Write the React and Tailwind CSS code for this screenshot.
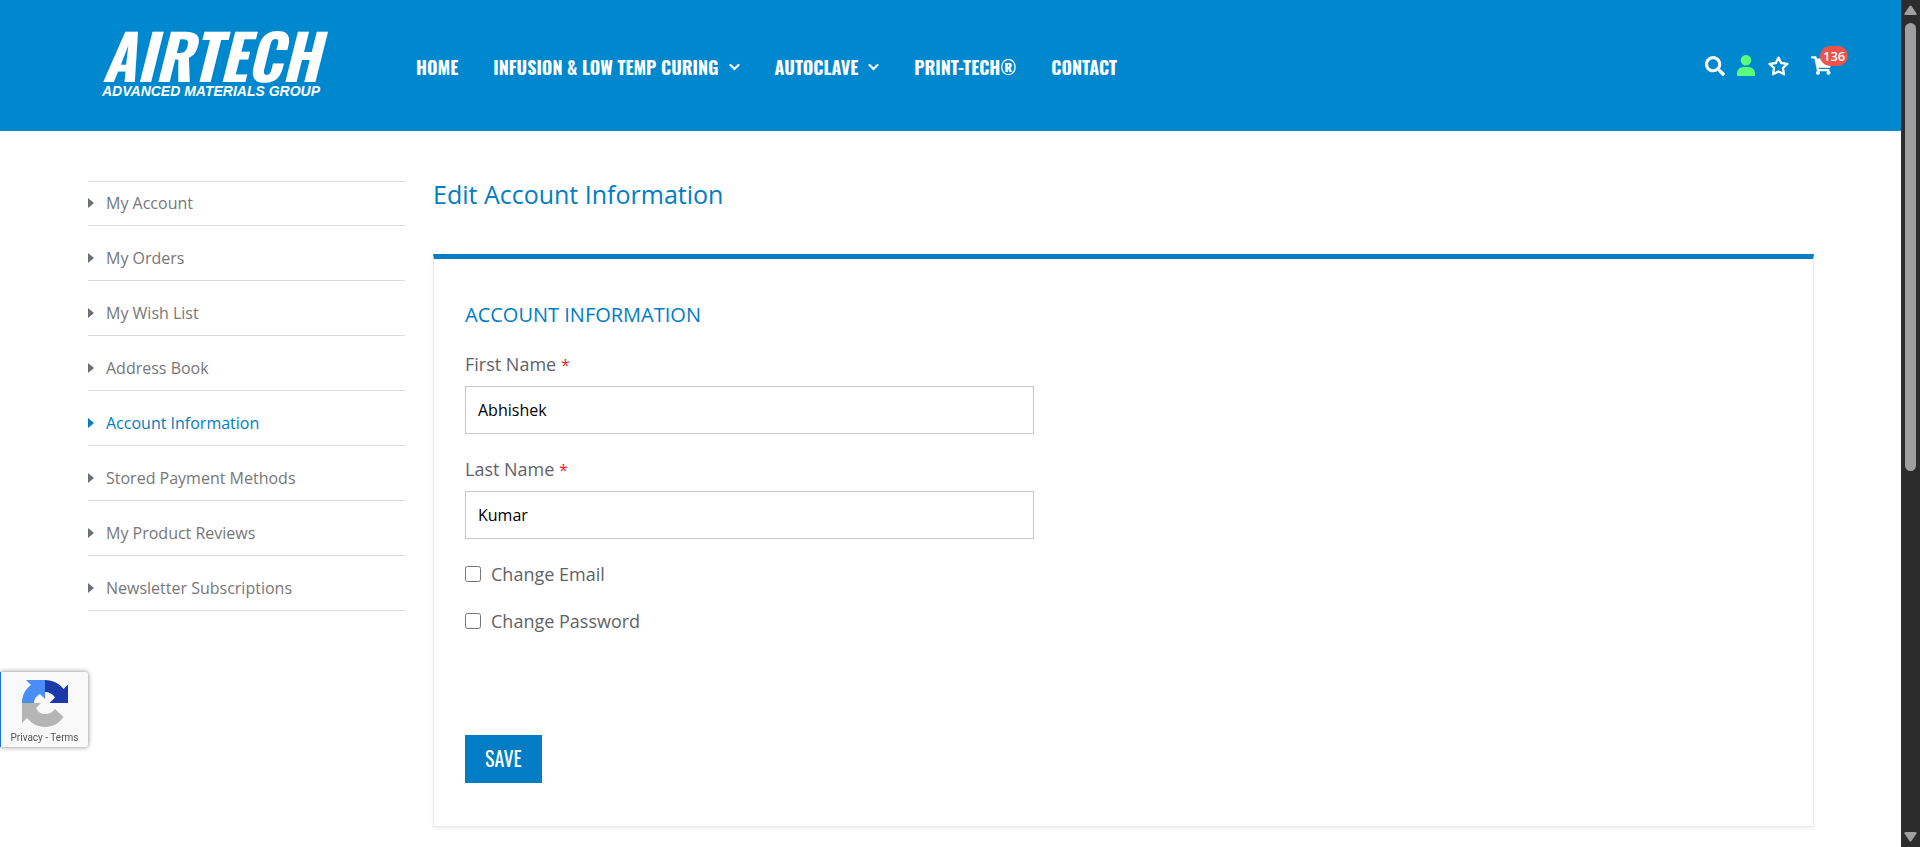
import React from "react";
import { FaSearch, FaShoppingCart } from "react-icons/fa";

const OSWALD = "font-['Oswald','Liberation_Sans_Narrow',sans-serif]";

const navItems = [
  { label: "HOME" },
  { label: "INFUSION & LOW TEMP CURING", menu: true },
  { label: "AUTOCLAVE", menu: true },
  { label: "PRINT-TECH®" },
  { label: "CONTACT" },
];

const accountLinks = [
  "My Account",
  "My Orders",
  "My Wish List",
  "Address Book",
  "Account Information",
  "Stored Payment Methods",
  "My Product Reviews",
  "Newsletter Subscriptions",
];

function Chevron() {
  return (
    <svg width="11" height="8" viewBox="0 0 11 8" fill="none" aria-hidden="true">
      <path d="M1.500 2 5.500 6 9.500 2" stroke="currentColor" strokeWidth="2.200" strokeLinecap="round" />
    </svg>
  );
}

function Logo() {
  return (
    <a href="#home" className="flex w-[312px] flex-col gap-[6px] pb-[4px] pl-[14px] font-bold italic text-white">
      <span className={`text-[62px] leading-[48px] ${OSWALD}`}>AIRTECH</span>
      <span className="font-['Liberation_Sans',sans-serif] text-[14px] leading-[14px]">ADVANCED MATERIALS GROUP</span>
    </a>
  );
}

function Header() {
  return (
    <header className="flex h-[131px] items-center bg-[#0088cf] pr-[69px] pl-[88px] text-white">
      <Logo />
      <nav className="ml-[16px] flex-1 pt-[2px]">
        <ul className={`flex items-center gap-[35px] text-[18px] leading-[24px] font-bold ${OSWALD}`}>
          {navItems.map((item) => (
            <li key={item.label}>
              <a href="#nav" className="flex items-center gap-[10px] whitespace-nowrap">
                {item.label}
                {item.menu && <Chevron />}
              </a>
            </li>
          ))}
        </ul>
      </nav>
      <div className="flex items-center">
        <button type="button" aria-label="Search">
          <FaSearch size={20} />
        </button>
        <a href="#account" aria-label="Account" className="ml-[12px]">
          <svg width="18" height="21" viewBox="0 0 18 21" fill="#5cff7c" aria-hidden="true">
            <circle cx="9" cy="5.3" r="5.3" />
            <path d="M0 21v-2.4C0 14.800 3 12 6.500 12h5c3.500 0 6.500 2.800 6.500 6.600V21z" />
          </svg>
        </a>
        <a href="#wishlist" aria-label="Wish list" className="ml-[13px]">
          <svg width="21" height="20" viewBox="0 0 21 20" fill="none" aria-hidden="true">
            <path
              d="M10.500 1.600 13.100 7 19.400 7.800 14.900 12 16 18.300 10.500 15.400 5 18.300 6.100 12 1.600 7.800 7.900 7z"
              stroke="currentColor"
              strokeWidth="2.300"
              strokeLinejoin="round"
            />
          </svg>
        </a>
        <a href="#cart" aria-label="Cart" className="relative ml-[22px]">
          <FaShoppingCart size={21} />
          <span className="absolute -top-[9px] left-[9px] rounded-full bg-[#ed5348] px-[3px] font-['Open_Sans',sans-serif] text-[13px] leading-[20px] font-semibold">
            136
          </span>
        </a>
      </div>
    </header>
  );
}

function Sidebar() {
  return (
    <ul className="w-[317px] shrink-0 border-t border-[#dcdcdc] text-[16px] leading-[22px]">
      {accountLinks.map((label, i) => {
        const active = label === "Account Information";
        return (
          <li
            key={label}
            className={`border-b border-[#dcdcdc] pb-[11px] ${i === 0 ? "pt-[10px]" : "pt-[21px]"} ${active ? "text-[#007dc5]" : "text-[#777777]"}`}
          >
            <a href="#section" className="flex items-center gap-[12px]">
              <svg width="6" height="10" viewBox="0 0 6 10" fill={active ? "#007dc5" : "#6b6f78"} aria-hidden="true">
                <path d="M0 0 6 5 0 10z" />
              </svg>
              {label}
            </a>
          </li>
        );
      })}
    </ul>
  );
}

function TextField({ id, label, value }) {
  return (
    <div>
      <label htmlFor={id} className="block text-[18px] leading-[24px]">
        {label} <span className="text-[16px] text-[#e02b27]">*</span>
      </label>
      <input
        id={id}
        type="text"
        defaultValue={value}
        className="mt-[9px] block h-[48px] w-full border border-[#c8c8c8] px-[12px] text-[16px] text-black outline-none"
      />
    </div>
  );
}

function CheckField({ id, label }) {
  return (
    <div className="flex items-center gap-[10px]">
      <input id={id} type="checkbox" className="h-[16px] w-[16px]" />
      <label htmlFor={id} className="text-[18px] leading-[24px]">
        {label}
      </label>
    </div>
  );
}

function AccountForm() {
  return (
    <form
      onSubmit={(e) => e.preventDefault()}
      className="mt-[46px] border border-t-[5px] border-[#ececec] border-t-[#007dc5] px-[31px] pt-[42px] pb-[43px] shadow-[0_2px_3px_rgba(0,0,0,0.06)]"
    >
      <h2 className="text-[20px] leading-[28px] text-[#007dc5]">ACCOUNT INFORMATION</h2>
      <div className="mt-[23px] flex w-full max-w-[569px] flex-col gap-[23px]">
        <TextField id="firstname" label="First Name" value="Abhishek" />
        <TextField id="lastname" label="Last Name" value="Kumar" />
        <CheckField id="change-email" label="Change Email" />
        <CheckField id="change-password" label="Change Password" />
      </div>
      <button
        type="submit"
        className={`mt-[102px] h-[48px] bg-[#007dc5] px-[20px] pb-[2px] text-[20px] leading-[24px] text-white ${OSWALD}`}
      >
        SAVE
      </button>
    </form>
  );
}

function ScrollBar() {
  return (
    <div aria-hidden="true" className="flex w-[19px] shrink-0 flex-col items-center justify-between bg-[#2c2c2c] py-[5px]">
      <div className="flex flex-col items-center gap-[8px]">
        <svg width="13" height="10" viewBox="0 0 13 10" fill="#9f9f9f">
          <path d="M5.500 1q1-1 2 0L12.500 8.500q.5 1.500-1 1.500h-10q-1.500 0-1-1.500z" />
        </svg>
        <div className="h-[448px] w-[11px] rounded-full bg-[#9f9f9f]" />
      </div>
      <svg width="13" height="10" viewBox="0 0 13 10" fill="#9f9f9f">
        <path d="M5.500 9q1 1 2 0L12.500 1.500q.5-1.500-1-1.500h-10q-1.500 0-1 1.500z" />
      </svg>
    </div>
  );
}

function RecaptchaBadge() {
  return (
    <div className="fixed bottom-[100px] left-0 flex h-[75px] w-[88px] flex-col items-center rounded-r-[3px] border-l border-[#1a73e8] bg-[#f9f9f9] pt-[8px] shadow-[0_0_5px_gray]">
      <svg width="46" height="47" viewBox="0 0 46 47" aria-hidden="true">
        <path fill="#1c3aa9" d="M23 0C31 0 37.500 3.500 41.500 9L46 4.500V23H27.500L33 17.500C31 14 27.500 12 23 12z" />
        <path fill="#4a8df6" d="M23 0v19l-5-5c-4 2-6 5-6 9H0C0 15 3.500 9 9 5L4 0z" />
        <path fill="#b5b5b5" d="M0 23h19l-5 5c2 4 5 6 9 6 4.500 0 7.500-1.500 10-5l8.500 8C37 43.500 31 47 23 47 15 47 9 43 5 38L0 43z" />
      </svg>
      <div className="mt-[5px] font-['Roboto',sans-serif] text-[10px] leading-[12px] text-[#555555]">
        <a href="#privacy">Privacy</a> - <a href="#terms">Terms</a>
      </div>
    </div>
  );
}

export default function App() {
  return (
    <div className="flex min-h-screen bg-white font-['Open_Sans','Noto_Sans',sans-serif] text-[#5f6368]">
      <div className="min-w-0 flex-1">
        <Header />
        <main className="flex gap-[28px] pt-[50px] pr-[87px] pl-[88px]">
          <Sidebar />
          <section className="min-w-0 flex-1">
            <h1 className="text-[25px] leading-[27px] text-[#007dc5]">Edit Account Information</h1>
            <AccountForm />
          </section>
        </main>
      </div>
      <ScrollBar />
      <RecaptchaBadge />
    </div>
  );
}
